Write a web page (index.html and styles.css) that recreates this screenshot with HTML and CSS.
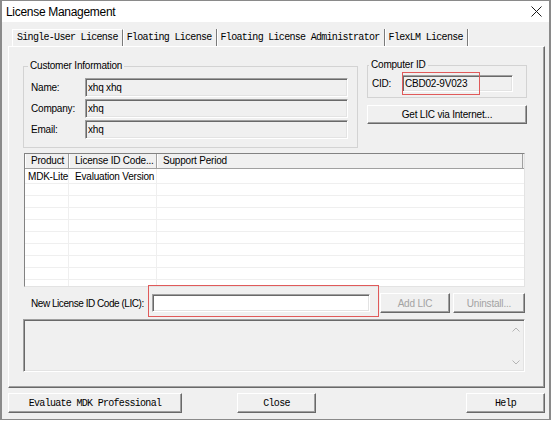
FILE: index.html
```html
<!DOCTYPE html>
<html lang="en">
<head>
  <meta charset="UTF-8">
  <title>License Management</title>
  <link rel="stylesheet" href="styles.css">
</head>
<body>
  <div class="window">
    <div class="titlebar">
      <span class="title">License Management</span>
      <svg class="close" width="11" height="11" viewBox="0 0 11 11"><path d="M0.5 0.5L10.5 10.5M10.5 0.5L0.5 10.5" stroke="#1a1a1a" stroke-width="1"/></svg>
    </div>

    <div class="client">
      <div class="tabs">
        <span class="tab active">Single-User License</span>
        <span class="tab">Floating License</span>
        <span class="tab">Floating License Administrator</span>
        <span class="tab">FlexLM License</span>
      </div>

      <div class="tabpanel">
        <div class="top-row">
          <fieldset class="group customer">
            <legend>Customer Information</legend>
            <div class="field"><label>Name:</label><input class="edit readonly" value="xhq xhq" readonly></div>
            <div class="field"><label>Company:</label><input class="edit readonly" value="xhq" readonly></div>
            <div class="field"><label>Email:</label><input class="edit readonly" value="xhq" readonly></div>
          </fieldset>

          <div class="right-col">
            <fieldset class="group computer">
              <legend>Computer ID</legend>
              <div class="field">
                <label>CID:</label>
                <span class="marked cid-mark"><input class="edit readonly cid" value="CBD02-9V023" readonly></span>
              </div>
            </fieldset>
            <button class="btn wide">Get LIC via Internet...</button>
          </div>
        </div>

        <div class="listview">
          <div class="lv-head">
            <span class="c1">Product</span>
            <span class="c2">License ID Code...</span>
            <span class="c3">Support Period</span>
          </div>
          <div class="lv-body">
            <div class="lv-row first"><span class="c1">MDK-Lite</span><span class="c2">Evaluation Version</span><span class="c3"></span></div>
            <div class="lv-row"><span class="c1"></span><span class="c2"></span><span class="c3"></span></div>
            <div class="lv-row"><span class="c1"></span><span class="c2"></span><span class="c3"></span></div>
            <div class="lv-row"><span class="c1"></span><span class="c2"></span><span class="c3"></span></div>
            <div class="lv-row"><span class="c1"></span><span class="c2"></span><span class="c3"></span></div>
            <div class="lv-row"><span class="c1"></span><span class="c2"></span><span class="c3"></span></div>
            <div class="lv-row"><span class="c1"></span><span class="c2"></span><span class="c3"></span></div>
            <div class="lv-row"><span class="c1"></span><span class="c2"></span><span class="c3"></span></div>
            <div class="lv-row"><span class="c1"></span><span class="c2"></span><span class="c3"></span></div>
            <div class="lv-row"><span class="c1"></span><span class="c2"></span><span class="c3"></span></div>
          </div>
        </div>

        <div class="lic-row">
          <label>New License ID Code (LIC):</label>
          <span class="marked lic-mark"><input class="edit lic"></span>
          <button class="btn disabled add">Add LIC</button>
          <button class="btn disabled uninstall">Uninstall...</button>
        </div>

        <div class="msgbox">
          <div class="scroll">
            <svg width="8" height="5" viewBox="0 0 8 5"><path d="M0.5 4.5L4 1L7.5 4.5" fill="none" stroke="#b4b4b4" stroke-width="1"/></svg>
            <svg width="8" height="5" viewBox="0 0 8 5"><path d="M0.5 0.5L4 4L7.5 0.5" fill="none" stroke="#b4b4b4" stroke-width="1"/></svg>
          </div>
        </div>
      </div>

      <div class="buttons">
        <button class="btn mono evaluate">Evaluate MDK Professional</button>
        <button class="btn mono close-btn">Close</button>
        <button class="btn mono help">Help</button>
      </div>
    </div>
  </div>
</body>
</html>
```

FILE: styles.css
```css
* { box-sizing: border-box; }
body { margin: 0; background: #fff; font-family: "Liberation Sans", Arial, sans-serif; font-size: 10px; letter-spacing: -0.2px; color: #000; }

.window { width: 551px; height: 420px; border: 1px solid #8a8a8a; border-width: 1px 2px 1px 2px; background: #f0f0f0; display: flex; flex-direction: column; }
.titlebar { height: 21px; background: #fff; display: flex; align-items: center; justify-content: space-between; padding: 0 7px 0 4px; }
.title { font-size: 12px; letter-spacing: -0.3px; color: #000; }

.client { flex: 1; padding: 7px 4px 0 6px; display: flex; flex-direction: column; }

/* tabs */
.tabs { display: flex; height: 17px; padding-left: 4px; font-family: "Liberation Mono", "Courier New", monospace; font-size: 10px; letter-spacing: -0.7px; }
.tab { padding: 0 4px; line-height: 17px; border-right: 1px solid #7a7a7a; box-shadow: 1px 0 0 #fff; white-space: nowrap; }
.tab.active { border-left: 1px solid #fff; border-top: 1px solid #fff; line-height: 15px; }

.tabpanel { height: 342px; border: 1px solid; border-color: #fff #696969 #696969 #fff; box-shadow: inset -1px -1px 0 #a0a0a0; padding: 13px 19px 13px 14px; }

/* group boxes */
.top-row { display: flex; gap: 9px; }
.group { margin: 0; border: 1px solid #d3d3d3; min-width: 0; }
.group legend { padding: 0 2px; margin-left: -3px; line-height: 12px; }
.customer { width: 335px; flex-shrink: 0; padding: 6px 9px 8px 7px; display: flex; flex-direction: column; gap: 2px; }
.field { display: flex; align-items: center; }
.field label { white-space: nowrap; flex-shrink: 0; }
.customer .field label { width: 54px; }
.customer .edit { flex: 1; height: 19px; }

.right-col { width: 160px; flex-shrink: 0; margin-top: -1px; display: flex; flex-direction: column; }
.computer { padding: 4px 13px 5px 4px; }
.computer .field label { width: 30px; }
.btn.wide { margin-top: 7px; height: 19px; width: 100%; }

/* edits and buttons */
.edit { font: inherit; letter-spacing: inherit; color: #000; padding: 0 2px; margin: 0; border: 1px solid; border-color: #a0a0a0 #fff #fff #a0a0a0; box-shadow: inset 1px 1px 0 #696969, inset -1px -1px 0 #e3e3e3; background: #fff; outline: none; }
.edit.readonly { background: #f0f0f0; }
.edit.cid { width: 111px; height: 17px; }

.btn { font: inherit; letter-spacing: inherit; color: #000; height: 20px; padding: 0; border: 1px solid; border-color: #fff #696969 #696969 #fff; box-shadow: inset -1px -1px 0 #a0a0a0; background: #f0f0f0; white-space: nowrap; flex-shrink: 0; }
.btn.disabled { color: #a3a3a3; }
.btn.mono { font-family: "Liberation Mono", "Courier New", monospace; letter-spacing: -0.7px; }

/* annotations */
.marked { position: relative; display: flex; flex-shrink: 0; }
.marked::after { content: ""; position: absolute; border: 1px solid #e05a5a; }
.cid-mark::after { left: 0; top: -3px; width: 76px; height: 21px; }
.lic-mark::after { left: -4px; top: -9px; right: -9px; bottom: -5px; }

/* list view */
.listview { margin: 5px 0 0 1px; height: 134px; border: 1px solid; border-color: #828282 #e3e3e3 #e3e3e3 #828282; background: #fff; overflow: hidden; }
.lv-head { display: flex; height: 15px; background: #f0f0f0; border-bottom: 1px solid #a0a0a0; line-height: 14px; }
.lv-head span { border-right: 1px solid #a0a0a0; box-shadow: inset 1px 0 0 #fff; padding-left: 6px; white-space: nowrap; }
.c1 { width: 44px; flex-shrink: 0; }
.c2 { width: 88px; flex-shrink: 0; }
.c3 { flex: 1; }
.lv-head .c3 { margin-right: 1px; }
.lv-row { display: flex; height: 12px; border-bottom: 1px solid #efefef; }
.lv-row.first { height: 15px; line-height: 16px; }
.lv-row span { border-right: 1px solid #efefef; white-space: nowrap; }
.lv-row .c1 { padding-left: 3px; }
.lv-row .c2 { padding-left: 6px; }
.lv-row .c3 { border-right: none; }

/* LIC row */
.lic-row { display: flex; align-items: center; height: 20px; margin-top: 6px; padding-left: 8px; }
.lic-row label { width: 121px; flex-shrink: 0; white-space: nowrap; letter-spacing: -0.45px; }
.edit.lic { width: 218px; height: 18px; }
.btn.add { width: 70px; margin-left: 10px; }
.btn.uninstall { width: 72px; margin-left: 3px; }

/* message box */
.msgbox { margin-top: 6px; height: 53px; border: 1px solid; border-color: #a0a0a0 #fff #fff #a0a0a0; box-shadow: inset 1px 1px 0 #696969, inset -1px -1px 0 #e3e3e3; display: flex; justify-content: flex-end; }
.scroll { width: 16px; display: flex; flex-direction: column; align-items: center; justify-content: space-between; padding: 7px 0 6px; }

/* bottom buttons */
.buttons { display: grid; grid-template-columns: 1fr auto 1fr; margin-top: 5px; }
.evaluate { width: 174px; }
.close-btn { width: 79px; }
.help { width: 79px; justify-self: end; }
```
